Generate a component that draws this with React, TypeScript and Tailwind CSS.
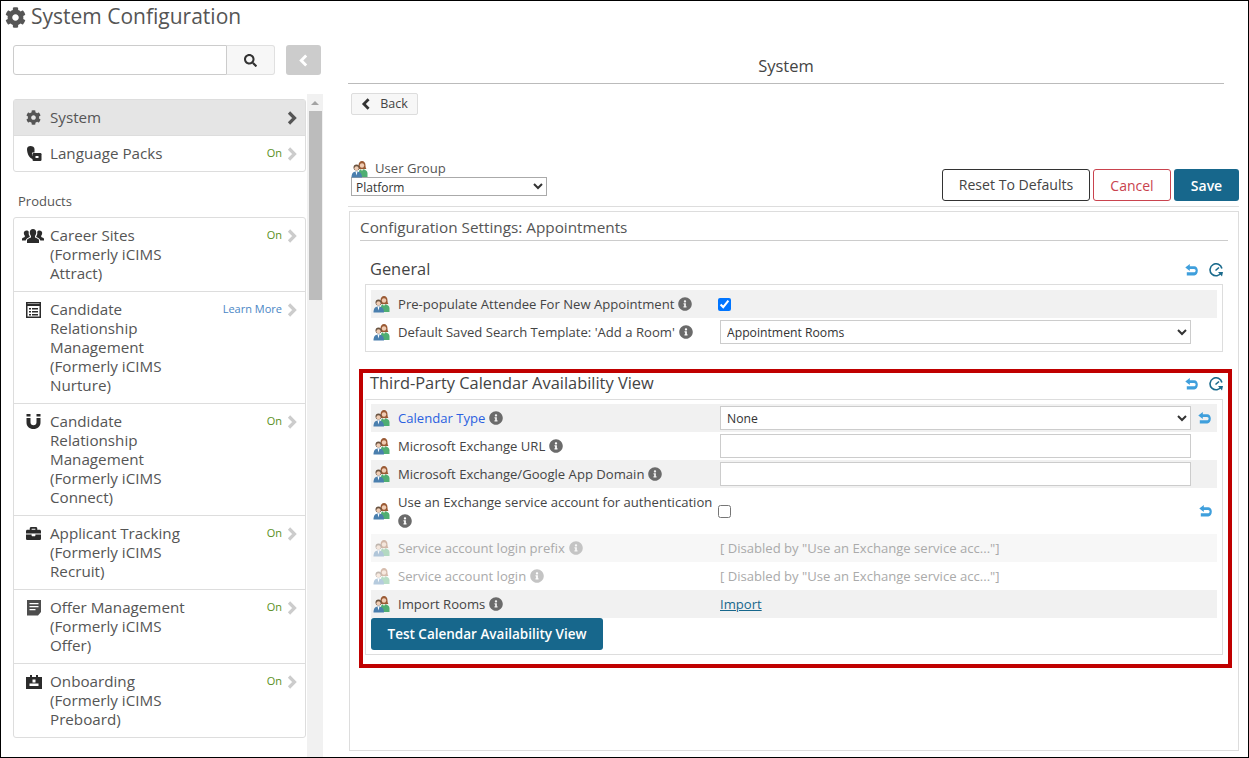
import React from "react";
import { FaCog, FaSearch, FaBriefcase, FaInfoCircle } from "react-icons/fa";

const ChevronR = ({ color, className = "" }: { color: string; className?: string }) => (
  <svg width="10" height="14" viewBox="0 0 10 14" fill="none" className={"shrink-0 " + className}>
    <path d="M2 1.500 L7.500 7 L2 12.500" stroke={color} strokeWidth="3.200" />
  </svg>
);

const ChevronL = ({ color, w = 10, h = 14 }: { color: string; w?: number; h?: number }) => (
  <svg width={w} height={h} viewBox="0 0 10 14" fill="none" className="shrink-0">
    <path d="M8 1.500 L2.500 7 L8 12.500" stroke={color} strokeWidth="3.200" />
  </svg>
);

const UsersIcon = ({ faded = false }: { faded?: boolean }) => (
  <svg width="17" height="17" viewBox="0 0 17 17" className={"shrink-0 " + (faded ? "opacity-40" : "")}>
    <path d="M7.500 4.500C7.500 1.500 9 0 11 0s3.500 1.500 3.500 4.500c0 2 .5 3 1 3.500h-8c.5-.5 .5-1.500 .5-3.500z" fill="#9a5a34" />
    <circle cx="11" cy="4.500" r="2.200" fill="#f0cdb4" />
    <path d="M8 16v-5c0-2 1.200-3 3-3s5 1 5.500 4v4z" fill="#4fae72" />
    <path d="M9.500 8h3l-1.500 2z" fill="#f6e6da" />
    <circle cx="5.500" cy="6.500" r="3" fill="#6a5340" />
    <circle cx="5.500" cy="7.300" r="2.100" fill="#f0cdb4" />
    <path d="M0.500 16.500c0-4 1.500-6 5-6s5.500 2 5.500 6z" fill="#4a7fae" />
    <path d="M4.500 10.500h2L5.500 14.500z" fill="#ffffff" />
  </svg>
);

const Info = ({ faded = false }: { faded?: boolean }) => (
  <FaInfoCircle className={"inline-block shrink-0 text-[14px] " + (faded ? "text-[#c4c4c4]" : "text-[#6b6b6b]")} />
);

const Undo = ({ className = "" }: { className?: string }) => (
  <svg width="13" height="12" viewBox="0 0 13 12" className={"shrink-0 " + className}>
    <path d="M4.800 0 L0.300 3.400 L4.800 6.900 V4.900 H9 C10.200 4.900 10.600 5.700 10.600 6.500 C10.600 7.500 10 8.300 9 8.300 H1.800 V11.500 H9.300 C11.400 11.500 12.800 9.300 12.800 6.600 C12.800 4.200 11.300 2.200 9.300 2.200 H4.800 Z" fill="#3f9fdc" />
  </svg>
);

const Clock = () => (
  <svg width="14" height="14" viewBox="0 0 14 14" fill="none" className="shrink-0">
    <path d="M12.400 9.500A6 6 0 1 1 12.900 5.500" stroke="#1a6a8c" strokeWidth="1.600" />
    <path d="M6.500 7.500 L10 4.500" stroke="#1a6a8c" strokeWidth="1.600" />
    <path d="M9 9 H14 L13 13.500z" fill="#1a6a8c" />
  </svg>
);

const LangIcon = () => (
  <svg width="16" height="16" viewBox="0 0 16 16">
    <path d="M1 3C1 1 2.500 0 4.500 0S8.500 1 8.500 3v3.500H6.300C5.500 8 6 9.500 7.200 10.300V13C3.500 12.500 1 8 1 3z" fill="#2b2b2b" />
    <rect x="6.500" y="7" width="9" height="8" rx="1.200" fill="#2b2b2b" />
    <path d="M9.500 10h3v2h-3z" fill="#ffffff" />
  </svg>
);

const GroupIcon = () => (
  <svg width="22" height="14" viewBox="0 0 22 14" className="-ml-[4px]">
    <path d="M11 0c2 0 3.200 1.500 3.200 3.500 0 1.500-.6 2.700-1.200 3.500v1.500c2 .8 3.800 1.500 4 2.500V14H5v-3c.2-1 2-1.700 4-2.500V7c-.6-.8-1.200-2-1.200-3.500C7.800 1.500 9 0 11 0z" fill="#2b2b2b" />
    <path d="M4.500 1.500c1 0 1.900.5 2.300 1.300-.4 1.700 0 3.200 .9 4.400v.8C5.500 9 4 9.800 3.700 11.500H0V9.800c.2-.8 1.500-1.200 2.800-1.800V6.800C2.200 6 1.800 5 1.800 4c0-1.500 1.200-2.500 2.700-2.500z" fill="#2b2b2b" />
    <path d="M17.500 1.500c-1 0-1.900.5-2.300 1.300 .4 1.700 0 3.200-.9 4.400v.8c2.200 1 3.700 1.800 4 3.500H22V9.800c-.2-.8-1.500-1.200-2.800-1.800V6.800c.6-.8 1-1.800 1-2.800 0-1.500-1.200-2.500-2.700-2.500z" fill="#2b2b2b" />
  </svg>
);

const ListIcon = () => (
  <svg width="15" height="16" viewBox="0 0 15 16">
    <rect x="0.750" y="0.750" width="13.500" height="14.500" fill="#ffffff" stroke="#2b2b2b" strokeWidth="1.500" />
    <path d="M1 2h13v2H1z" fill="#2b2b2b" />
    <path d="M3 6h2v1.500H3zM6 6h6v1.500H6zM3 9h2v1.500H3zM6 9h6v1.500H6zM3 12h2v1.500H3zM6 12h6v1.500H6z" fill="#2b2b2b" />
  </svg>
);

const MagnetIcon = () => (
  <svg width="15" height="15" viewBox="0 0 15 15">
    <path d="M0.500 0h4v2.500h-4zM10.500 0h4v2.500h-4z" fill="#2b2b2b" />
    <path d="M0.500 4h4v4.200c0 2 1.200 3 3 3s3-1 3-3V4h4v4.500c0 4-3 6.500-7 6.500s-7-2.500-7-6.500z" fill="#2b2b2b" />
  </svg>
);

const DocIcon = () => (
  <svg width="14" height="16" viewBox="0 0 14 16" className="ml-[1px]">
    <path d="M0 0h14v12l-3 3.500H0z" fill="#4d4d4d" />
    <path d="M2.500 3h9v1.300h-9zM2.500 6h9v1.300h-9zM2.500 9h6v1.300h-6z" fill="#ffffff" />
  </svg>
);

const BoardIcon = () => (
  <svg width="16" height="14" viewBox="0 0 16 14">
    <path d="M0 2h4V0h2v2h4V0h2v2h4v12H0z" fill="#2b2b2b" />
    <path d="M6.500 4.500h3v3h-3zM3.500 8.500h9v2.500h-9z" fill="#ffffff" />
  </svg>
);

type Item = { icon: React.ReactNode; name: string; status: string };

const products: Item[] = [
  { icon: <GroupIcon />, name: "Career Sites (Formerly iCIMS Attract)", status: "On" },
  { icon: <ListIcon />, name: "Candidate Relationship Management (Formerly iCIMS Nurture)", status: "Learn More" },
  { icon: <MagnetIcon />, name: "Candidate Relationship Management (Formerly iCIMS Connect)", status: "On" },
  { icon: <FaBriefcase className="text-[15px] text-[#2b2b2b]" />, name: "Applicant Tracking (Formerly iCIMS Recruit)", status: "On" },
  { icon: <DocIcon />, name: "Offer Management (Formerly iCIMS Offer)", status: "On" },
  { icon: <BoardIcon />, name: "Onboarding (Formerly iCIMS Preboard)", status: "On" },
];

const Row = ({ item }: { item: Item }) => (
  <div className="flex items-start border-b border-[#dddddd] last:border-b-0 pl-[12px] pr-[8px] pt-[8px] pb-[8px]">
    <div className="w-[24px] h-[19px] flex items-center shrink-0">{item.icon}</div>
    <div className="w-[140px] leading-[19px] text-[15.200px] text-[#555555]">{item.name}</div>
    <div className="ml-auto flex items-center h-[19px] gap-[5px]">
      <span className={"text-[11px] " + (item.status === "On" ? "text-[#5a8f1c]" : "text-[#4a86c5]")}>{item.status}</span>
      <ChevronR color="#cccccc" />
    </div>
  </div>
);

type SRow = { label: string; shade?: boolean; blue?: boolean; control?: React.ReactNode; undo?: boolean; faded?: boolean };

const SettingRow = ({ r }: { r: SRow }) => (
  <div className={"flex items-center h-[28px] " + (r.shade ? (r.faded ? "bg-[#f7f7f7]" : "bg-[#f1f1f1]") : "")}>
    <div className="w-[27px] flex pl-[2px] shrink-0"><UsersIcon faded={r.faded} /></div>
    <div className={"w-[322px] flex items-center gap-[4px] shrink-0 text-[13.100px] pt-[1px] " + (r.blue ? "text-[#2a5fe0]" : r.faded ? "text-[#aaaaaa]" : "text-[#444444]")}>
      <span>{r.label}</span>
      <Info faded={r.faded} />
    </div>
    <div className="w-[471px] shrink-0 text-[13.100px]">{r.control}</div>
    {r.undo && <Undo className="ml-[7px]" />}
  </div>
);

const inputCls = "block w-[471px] h-[24px] border border-[#cccccc] bg-white";
const selectCls = "block w-[471px] h-[24px] border border-[#cccccc] bg-white text-[12.200px] text-[#333333] pl-[2px]";

const disabled = '[ Disabled by "Use an Exchange service acc..."]';

const SectionHead = ({ title }: { title: string }) => (
  <div className="flex items-center justify-between h-[20px] mb-[6px] pl-[5px]">
    <span className="text-[16.400px] text-[#444444]">{title}</span>
    <span className="flex items-center gap-[11px] pt-[2px]"><Undo /><Clock /></span>
  </div>
);

export default function App() {
  return (
    <div className="w-[1249px] h-[758px] border border-black overflow-hidden bg-white flex flex-col text-[#555555]" style={{ fontFamily: '"Open Sans", sans-serif' }}>
      <div className="flex items-center h-[32px] pl-[4px] gap-[5px] shrink-0">
        <FaCog className="text-[21px] text-[#555555]" />
        <span className="text-[21px] text-[#555555]">System Configuration</span>
      </div>
      <div className="flex flex-1 min-h-0">
        <aside className="w-[322px] shrink-0 flex flex-col">
          <div className="flex pl-[12px] pt-[12px] shrink-0">
            <input className="w-[214px] h-[30px] border border-[#cccccc] rounded-l-[3px] bg-white" />
            <button className="w-[48px] h-[30px] border border-l-0 border-[#e0e0e0] rounded-r-[3px] bg-[#f7f7f7] flex items-center justify-center">
              <FaSearch className="text-[13px] text-[#333333]" />
            </button>
            <button className="ml-[11px] w-[35px] h-[30px] rounded-[3px] bg-[#cccccc] flex items-center justify-center">
              <ChevronL color="#ffffff" w={9} h={13} />
            </button>
          </div>
          <div className="flex flex-1 min-h-0 mt-[19px]">
            <div className="w-[293px] ml-[12px] shrink-0 pt-[5px]">
              <div className="border border-[#dddddd] rounded-[3px]">
                <div className="flex items-center h-[36px] bg-[#e5e5e5] border-b border-[#dddddd] pl-[12px] pr-[8px]">
                  <div className="w-[24px] shrink-0"><FaCog className="text-[15px] text-[#555555]" /></div>
                  <span className="text-[15.200px]">System</span>
                  <ChevronR color="#555555" className="ml-auto" />
                </div>
                <div className="flex items-center h-[35px] pl-[12px] pr-[8px]">
                  <div className="w-[24px] shrink-0"><LangIcon /></div>
                  <span className="text-[15.200px]">Language Packs</span>
                  <span className="ml-auto text-[11px] text-[#5a8f1c]">On</span>
                  <ChevronR color="#cccccc" className="ml-[5px]" />
                </div>
              </div>
              <div className="text-[13px] text-[#555555] pl-[5px] mt-[20px] mb-[7px] leading-[18px]">Products</div>
              <div className="border border-[#dddddd] rounded-[3px]">
                {products.map((p, i) => <Row key={i} item={p} />)}
              </div>
            </div>
            <div className="w-[16px] ml-auto bg-[#f1f1f1] flex flex-col items-center shrink-0">
              <div className="h-[17px] w-full flex items-center justify-center">
                <div className="w-0 h-0 border-x-[4px] border-x-transparent border-b-[4px] border-b-[#a3a3a3]" />
              </div>
              <div className="w-[13px] h-[189px] bg-[#bcbcbc]" />
            </div>
          </div>
        </aside>
        <main className="flex-1 min-w-0 pl-[25px] pr-[9px] flex flex-col">
          <div className="w-[876px] h-[29px] pt-[21px] border-b border-[#bbbbbb] box-content text-center text-[16.500px] text-[#444444] leading-[24px]">System</div>
          <button className="ml-[3px] mt-[9px] w-[67px] h-[22px] border border-[#dddddd] rounded-[2px] bg-[#f7f7f7] flex items-center justify-center gap-[9px] text-[12.500px] text-[#444444]">
            <ChevronL color="#333333" w={10} h={12} />Back
          </button>
          <div className="flex items-end justify-between mt-[32px] pb-[5px] border-b border-[#dddddd] h-[60px]">
            <div className="pl-[3px] pb-[5px]">
              <div className="flex items-center gap-[7px] text-[13.100px] text-[#555555] h-[16px]"><UsersIcon />User Group</div>
              <select className="block w-[196px] h-[19px] border border-[#aaaaaa] bg-white text-[12px] text-[#333333]"><option>Platform</option></select>
            </div>
            <div className="flex gap-[3px]">
              <button className="w-[148px] h-[32px] border border-[#333333] rounded-[3px] text-[14.100px] text-[#444444] bg-white">Reset To Defaults</button>
              <button className="w-[78px] h-[32px] border border-[#c9434e] rounded-[3px] text-[14px] text-[#c9434e] bg-white">Cancel</button>
              <button className="w-[65px] h-[32px] rounded-[3px] text-[14px] font-semibold text-white bg-[#17678c]">Save</button>
            </div>
          </div>
          <div className="mt-[4px] ml-[1px] h-[540px] border border-[#dddddd] px-[10px] pt-[5px]">
            <div className="text-[15.300px] text-[#555555] h-[24px] border-b border-[#cccccc] leading-[20px]">Configuration Settings: Appointments</div>
            <div className="mt-[18px] px-[5px]">
              <SectionHead title="General" />
              <div className="border border-[#dddddd] p-[5px] -mt-[1px]">
                <SettingRow r={{ label: "Pre-populate Attendee For New Appointment", shade: true, control: <input type="checkbox" defaultChecked className="block w-[13px] h-[13px] -ml-[2px]" /> }} />
                <SettingRow r={{ label: "Default Saved Search Template: 'Add a Room'", control: <select className={selectCls}><option>Appointment Rooms</option></select> }} />
              </div>
            </div>
            <div className="mt-[17px] -ml-[1px] -mr-[4px] border-[4px] border-[#c00000] pl-[2px] pr-[5px] pb-[9px]">
              <SectionHead title="Third-Party Calendar Availability View" />
              <div className="border border-[#dddddd] px-[5px] pt-[4px] pb-[4px]">
                <SettingRow r={{ label: "Calendar Type", shade: true, blue: true, undo: true, control: <select className={selectCls}><option>None</option></select> }} />
                <SettingRow r={{ label: "Microsoft Exchange URL", control: <input className={inputCls} /> }} />
                <SettingRow r={{ label: "Microsoft Exchange/Google App Domain", shade: true, control: <input className={inputCls} /> }} />
                <div className="flex items-center h-[46px]">
                  <div className="w-[27px] flex pl-[2px] shrink-0"><UsersIcon /></div>
                  <div className="w-[320px] shrink-0 text-[13.100px] text-[#444444] leading-[17px]">
                    <div>Use an Exchange service account for authentication</div>
                    <Info />
                  </div>
                  <input type="checkbox" className="block w-[13px] h-[13px] shrink-0" />
                  <Undo className="ml-[468px]" />
                </div>
                <SettingRow r={{ label: "Service account login prefix", shade: true, faded: true, control: <div className="text-[#aaaaaa] pt-[1px]">{disabled}</div> }} />
                <SettingRow r={{ label: "Service account login", faded: true, control: <div className="text-[#aaaaaa] pt-[1px]">{disabled}</div> }} />
                <SettingRow r={{ label: "Import Rooms", shade: true, control: <div className="text-[#17678c] underline pt-[1px]">Import</div> }} />
                <button className="block w-[232px] h-[32px] rounded-[3px] bg-[#17678c] text-white text-[13.500px] font-semibold">Test Calendar Availability View</button>
              </div>
            </div>
          </div>
        </main>
      </div>
    </div>
  );
}
